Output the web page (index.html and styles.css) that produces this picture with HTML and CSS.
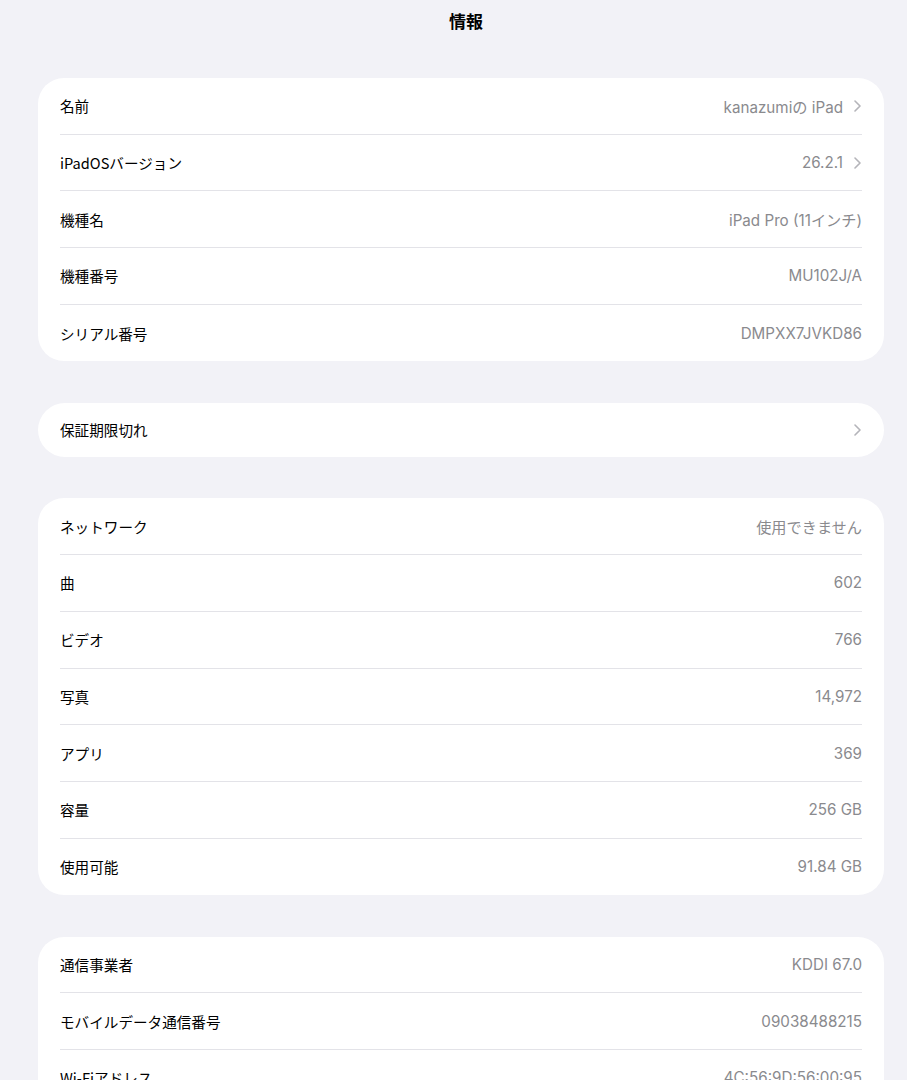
FILE: index.html
```html
<!DOCTYPE html>
<html lang="ja">
<head>
<meta charset="utf-8">
<link rel="stylesheet" href="styles.css">
</head>
<body>
<div class="page">
  <h1 class="title">情報</h1>

  <section class="card">
    <div class="row"><span class="label">名前</span><span class="value">kanazumiの iPad<svg class="chev" viewBox="0 0 7 12"><path d="M1 1l5 5-5 5"/></svg></span></div>
    <div class="row"><span class="label">iPadOSバージョン</span><span class="value">26.2.1<svg class="chev" viewBox="0 0 7 12"><path d="M1 1l5 5-5 5"/></svg></span></div>
    <div class="row"><span class="label">機種名</span><span class="value">iPad Pro (11インチ)</span></div>
    <div class="row"><span class="label">機種番号</span><span class="value">MU102J/A</span></div>
    <div class="row"><span class="label">シリアル番号</span><span class="value">DMPXX7JVKD86</span></div>
  </section>

  <section class="card pill">
    <div class="row"><span class="label">保証期限切れ</span><span class="value"><svg class="chev" viewBox="0 0 7 12"><path d="M1 1l5 5-5 5"/></svg></span></div>
  </section>

  <section class="card">
    <div class="row"><span class="label">ネットワーク</span><span class="value">使用できません</span></div>
    <div class="row"><span class="label">曲</span><span class="value">602</span></div>
    <div class="row"><span class="label">ビデオ</span><span class="value">766</span></div>
    <div class="row"><span class="label">写真</span><span class="value">14,972</span></div>
    <div class="row"><span class="label">アプリ</span><span class="value">369</span></div>
    <div class="row"><span class="label">容量</span><span class="value">256 GB</span></div>
    <div class="row"><span class="label">使用可能</span><span class="value">91.84 GB</span></div>
  </section>

  <section class="card">
    <div class="row"><span class="label">通信事業者</span><span class="value">KDDI 67.0</span></div>
    <div class="row"><span class="label">モバイルデータ通信番号</span><span class="value">09038488215</span></div>
    <div class="row"><span class="label">Wi-Fiアドレス</span><span class="value">4C:56:9D:56:00:95</span></div>
    <div class="row"><span class="label">Bluetooth</span><span class="value">4C:56:9D:5B:9F:A1</span></div>
  </section>
</div>
</body>
</html>
```

FILE: styles.css
```css
html, body {
  margin: 0;
  padding: 0;
  background: #f2f2f7;
}
body {
  font-family: "Inter", "Noto Sans CJK JP", sans-serif;
  color: #000;
  -webkit-font-smoothing: antialiased;
}
.page {
  padding: 0 23px 40px 38px;
  display: flex;
  flex-direction: column;
  gap: 41.5px;
}
.title {
  margin: 0;
  height: 36px;
  padding: 4px 0 0 10px;
  margin-bottom: -3.5px;
  text-align: center;
  font-size: 17px;
  font-weight: 700;
  line-height: 34px;
  font-family: "Noto Sans CJK JP", sans-serif;
}
.card {
  background: #fff;
  border-radius: 26px;
  padding: 0 22px;
}
.pill {
  border-radius: 28px;
}
.row {
  height: 56.7px;
  display: flex;
  align-items: center;
  justify-content: space-between;
  border-bottom: 1px solid #e3e3e8;
  box-sizing: border-box;
  font-size: 15px;
}
.pill .row { height: 54px; }
.row:last-child { border-bottom: none; }
.label {
  font-family: "Noto Sans CJK JP", sans-serif;
  font-size: 14.6px;
  color: #000;
}
.value {
  display: flex;
  align-items: center;
  color: #8a8a8e;
  font-size: 15.2px;
  font-family: "Inter", "Noto Sans CJK JP", sans-serif;
}
.chev {
  width: 7px;
  height: 12px;
  margin-left: 11px;
  margin-right: 1px;
  fill: none;
  stroke: #b4b4b9;
  stroke-width: 1.6;
  stroke-linecap: round;
  stroke-linejoin: round;
}
```
